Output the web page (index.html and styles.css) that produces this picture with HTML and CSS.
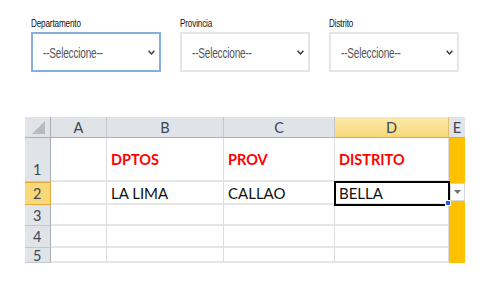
FILE: index.html
```html
<!DOCTYPE html>
<html>
<head lang="es">
<meta charset="UTF-8">
<title>Ubigeo</title>
<link rel="stylesheet" href="styles.css">
</head>
<body>
	<!-- combos de ubigeo -->
	<div class="filters">
		<div class="field">
			<label class="lbl"><span class="narrow">Departamento</span></label>
			<div class="combo focus">
				<span class="narrow">--Seleccione--</span>
				<svg class="chev" width="7" height="5" viewBox="0 0 7 5"><polyline points="0.6,0.8 3.5,4 6.4,0.8" fill="none" stroke="#3a3a3a" stroke-width="1.4"/></svg>
			</div>
		</div>
		<div class="field">
			<label class="lbl"><span class="narrow">Provincia</span></label>
			<div class="combo">
				<span class="narrow">--Seleccione--</span>
				<svg class="chev" width="7" height="5" viewBox="0 0 7 5"><polyline points="0.6,0.8 3.5,4 6.4,0.8" fill="none" stroke="#3a3a3a" stroke-width="1.4"/></svg>
			</div>
		</div>
		<div class="field">
			<label class="lbl"><span class="narrow">Distrito</span></label>
			<div class="combo">
				<span class="narrow">--Seleccione--</span>
				<svg class="chev" width="7" height="5" viewBox="0 0 7 5"><polyline points="0.6,0.8 3.5,4 6.4,0.8" fill="none" stroke="#3a3a3a" stroke-width="1.4"/></svg>
			</div>
		</div>
	</div>

	<!-- hoja de excel -->
	<div class="sheet">
		<div class="hd corner"><span class="tri"></span></div>
		<div class="hd col">A</div>
		<div class="hd col">B</div>
		<div class="hd col">C</div>
		<div class="hd col sel">D</div>
		<div class="hd col last">E</div>

		<div class="hd row r1">1</div>
		<div class="cell"></div>
		<div class="cell red">DPTOS</div>
		<div class="cell red">PROV</div>
		<div class="cell red">DISTRITO</div>
		<div class="cell ecol"></div>

		<div class="hd row sel">2</div>
		<div class="cell"></div>
		<div class="cell">LA LIMA</div>
		<div class="cell">CALLAO</div>
		<div class="cell active">BELLA
			<span class="handle"></span>
			<span class="drop"><svg width="7" height="4" viewBox="0 0 7 4"><polygon points="0,0 7,0 3.5,4" fill="#6d6d6d"/></svg></span>
		</div>
		<div class="cell ecol"></div>

		<div class="hd row">3</div>
		<div class="cell"></div>
		<div class="cell"></div>
		<div class="cell"></div>
		<div class="cell"></div>
		<div class="cell ecol"></div>

		<div class="hd row">4</div>
		<div class="cell"></div>
		<div class="cell"></div>
		<div class="cell"></div>
		<div class="cell"></div>
		<div class="cell ecol"></div>

		<div class="hd row">5</div>
		<div class="cell"></div>
		<div class="cell"></div>
		<div class="cell"></div>
		<div class="cell"></div>
		<div class="cell ecol"></div>
	</div>
</body>
</html>
```

FILE: styles.css
```css
body {
	margin: 0;
	background: #FFFFFF;
	font-family: "Liberation Sans Narrow", "Liberation Sans", sans-serif;
}

.filters {
	display: flex;
	gap: 19px;
	padding: 17px 0 0 31px;
}
.field {
	width: 130px;
	display: flex;
	flex-direction: column;
}
.narrow {
	display: inline-block;
	transform: scaleX(0.74);
	transform-origin: left center;
	white-space: nowrap;
}
.combo .narrow {
	transform: scaleX(0.67);
}
.lbl {
	height: 15px;
	font-size: 11px;
	line-height: 12px;
	color: #111111;
	letter-spacing: -0.2px;
}
.combo {
	box-sizing: border-box;
	height: 40px;
	border: 2px solid #e3e6e9;
	display: flex;
	align-items: center;
	justify-content: space-between;
	padding: 0 4px 0 10px;
	font-size: 15px;
	color: #555555;
	letter-spacing: -0.3px;
}
.combo.focus {
	border-color: #86addb;
}
.chev {
	margin-top: 1px;
}

/* excel */
.sheet {
	margin: 45px 0 0 25px;
	width: 441px;
	display: grid;
	grid-template-columns: 26px 56px 117px 111px 114px 16px;
	grid-template-rows: 21px 44px 23px 21px 22px 15px;
	overflow: hidden;
	font-family: Lato, "Open Sans", sans-serif;
}
.sheet > div {
	box-sizing: border-box;
}
.hd {
	background: #e0e4e9;
	color: #3d4654;
	font-size: 14.5px;
	border-right: 1px solid #c3c8ce;
	border-bottom: 1px solid #c3c8ce;
}
.hd.col {
	display: flex;
	align-items: center;
	justify-content: center;
	border-bottom: 1px solid #a9aeb4;
}
.hd.col.last {
	border-right: none;
}
.hd.row {
	display: flex;
	align-items: center;
	padding-left: 8px;
	border-right: 1px solid #a9aeb4;
}
.hd.r1 {
	align-items: flex-end;
	padding-bottom: 3px;
}
.hd.col.sel {
	background: linear-gradient(#fbe9ad, #f8d878);
	border-bottom: 1px solid #e8a93c;
	border-right: 1px solid #e3bf6b;
}
.hd.row.sel {
	background: #f9d878;
	border-bottom: 1px solid #e8a93c;
	border-right: 1px solid #e8a93c;
	border-top: 1px solid #e8a93c;
}
.corner {
	position: relative;
	border-bottom: 1px solid #a9aeb4;
	border-right: 1px solid #a9aeb4;
}
.tri {
	position: absolute;
	right: 5px;
	bottom: 3px;
	width: 13px;
	height: 13px;
	background: #b7bbc0;
	clip-path: polygon(100% 0, 100% 100%, 0 100%);
}
.cell {
	border-right: 1px solid #dadcdf;
	border-bottom: 2px solid #e4e5e7;
	font-size: 15px;
	color: #111111;
	padding-left: 4px;
	display: flex;
	align-items: center;
}
.red {
	color: #ff0000;
	font-weight: bold;
	font-size: 14.5px;
}
.ecol {
	background: #ffc000;
	border: none;
}
.active {
	position: relative;
	z-index: 2;
	outline: 2px solid #000000;
	outline-offset: -1px;
}
.handle {
	position: absolute;
	right: -3px;
	bottom: -3px;
	width: 4px;
	height: 4px;
	background: #2060e0;
	border: 1px solid #ffffff;
}
.drop {
	position: absolute;
	left: 115px;
	top: 1px;
	width: 15px;
	height: 18px;
	background: #ffffff;
	border: 1px solid #d4d7db;
	box-sizing: border-box;
	display: flex;
	align-items: center;
	justify-content: center;
}
```
